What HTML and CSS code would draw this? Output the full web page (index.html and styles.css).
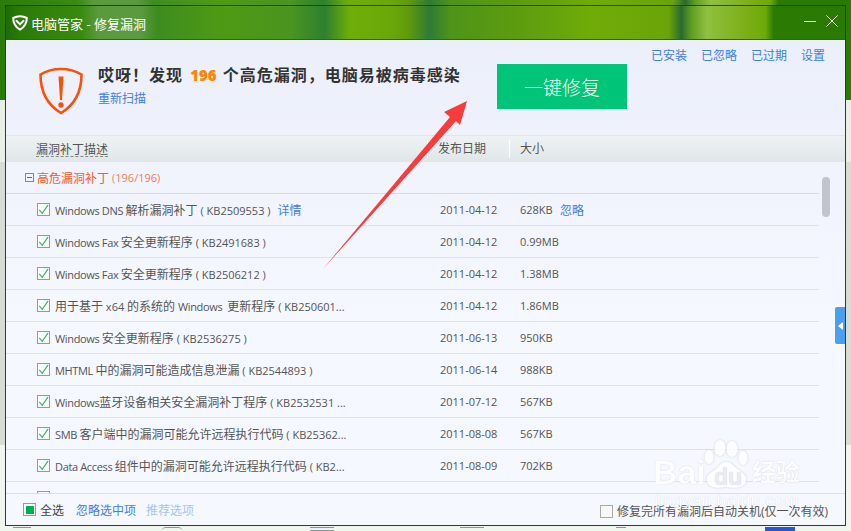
FILE: index.html
```html
<!DOCTYPE html>
<html lang="zh">
<head>
<meta charset="utf-8">
<title>电脑管家 - 修复漏洞</title>
<link rel="stylesheet" href="styles.css">
</head>
<body>
<div class="desktop">
  <div class="window">
    <header class="titlebar">
      <div class="title">
        <svg class="logo" viewBox="0 0 16 16" width="16" height="16"><path d="M8 1.200C5.800 1.200 3.400 1.800 1.200 3c0 4.600 2.200 9 6.800 11.600C12.600 12 14.800 7.600 14.800 3 12.600 1.800 10.200 1.200 8 1.200z" fill="none" stroke="#fff" stroke-width="2"/><path d="M4 5.200L8 9.400l4-4.200" fill="none" stroke="#fff" stroke-width="2"/></svg>
        <span>电脑管家 - 修复漏洞</span>
      </div>
      <div class="winbtns">
        <svg width="14" height="12" viewBox="0 0 14 12"><path d="M1 6.500h12" stroke="#fff" stroke-width="1"/></svg>
        <svg width="12" height="12" viewBox="0 0 12 12"><path d="M.5.500l11 11M11.500.500l-11 11" stroke="#fff" stroke-width="1" fill="none"/></svg>
      </div>
    </header>
    <section class="hero">
      <svg class="shield" viewBox="0 0 46 48" width="46" height="48"><path d="M23 2C16 2 9 3.500 2.500 7.500 2.500 22 8 37 23 46 38 37 43.500 22 43.500 7.500 37 3.500 30 2 23 2z" fill="none" stroke="#fd4f07" stroke-width="2.600"/><path d="M20.500 9.500h5L24 33h-2z" fill="#fd4f07"/><circle cx="23" cy="38" r="2.700" fill="#fd4f07"/></svg>
      <div class="hero-text">
        <h1 class="headline">哎呀！发现 <b class="count">196</b> 个高危漏洞，电脑易被病毒感染</h1>
        <a class="link rescan">重新扫描</a>
      </div>
      <button class="fix">一键修复</button>
      <nav class="toplinks"><a class="link">已安装</a><a class="link">已忽略</a><a class="link">已过期</a><a class="link">设置</a></nav>
    </section>
    <div class="thead">
      <span class="col-desc">漏洞补丁描述</span>
      <span class="col-date">发布日期</span>
      <span class="col-size">大小</span>
    </div>
    <div class="listwrap">
      <div class="group"><span class="minus"></span><span class="group-name">高危漏洞补丁</span><span class="group-num">(196/196)</span></div>
      <div class="row"><span class="check"><svg viewBox="0 0 13 13"><path d="M1.500 7l3.500 4L12 1" fill="none" stroke="#2dbb55" stroke-width="1.300"/></svg></span><span class="name"><span class="en">Windows DNS </span><span class="zh">解析漏洞补丁</span> ( KB2509553 )<a class="link detail">详情</a></span><span class="date">2011-04-12</span><span class="size">628KB</span><a class="link ignore">忽略</a></div>
      <div class="row"><span class="check"><svg viewBox="0 0 13 13"><path d="M1.500 7l3.500 4L12 1" fill="none" stroke="#2dbb55" stroke-width="1.300"/></svg></span><span class="name"><span class="en">Windows Fax </span><span class="zh">安全更新程序</span> ( KB2491683 )</span><span class="date">2011-04-12</span><span class="size">0.99MB</span></div>
      <div class="row"><span class="check"><svg viewBox="0 0 13 13"><path d="M1.500 7l3.500 4L12 1" fill="none" stroke="#2dbb55" stroke-width="1.300"/></svg></span><span class="name"><span class="en">Windows Fax </span><span class="zh">安全更新程序</span> ( KB2506212 )</span><span class="date">2011-04-12</span><span class="size">1.38MB</span></div>
      <div class="row"><span class="check"><svg viewBox="0 0 13 13"><path d="M1.500 7l3.500 4L12 1" fill="none" stroke="#2dbb55" stroke-width="1.300"/></svg></span><span class="name"><span class="zh">用于基于</span> x64 <span class="zh">的系统的</span> <span class="en">Windows&nbsp; </span><span class="zh">更新程序</span> ( KB250601...</span><span class="date">2011-04-12</span><span class="size">1.86MB</span></div>
      <div class="row"><span class="check"><svg viewBox="0 0 13 13"><path d="M1.500 7l3.500 4L12 1" fill="none" stroke="#2dbb55" stroke-width="1.300"/></svg></span><span class="name"><span class="en">Windows </span><span class="zh">安全更新程序</span> ( KB2536275 )</span><span class="date">2011-06-13</span><span class="size">950KB</span></div>
      <div class="row"><span class="check"><svg viewBox="0 0 13 13"><path d="M1.500 7l3.500 4L12 1" fill="none" stroke="#2dbb55" stroke-width="1.300"/></svg></span><span class="name"><span class="en">MHTML </span><span class="zh">中的漏洞可能造成信息泄漏</span> ( KB2544893 )</span><span class="date">2011-06-14</span><span class="size">988KB</span></div>
      <div class="row"><span class="check"><svg viewBox="0 0 13 13"><path d="M1.500 7l3.500 4L12 1" fill="none" stroke="#2dbb55" stroke-width="1.300"/></svg></span><span class="name"><span class="en">Windows</span><span class="zh">蓝牙设备相关安全漏洞补丁程序</span> ( KB2532531 ...</span><span class="date">2011-07-12</span><span class="size">567KB</span></div>
      <div class="row"><span class="check"><svg viewBox="0 0 13 13"><path d="M1.500 7l3.500 4L12 1" fill="none" stroke="#2dbb55" stroke-width="1.300"/></svg></span><span class="name"><span class="en">SMB </span><span class="zh">客户端中的漏洞可能允许远程执行代码</span> ( KB25362...</span><span class="date">2011-08-08</span><span class="size">567KB</span></div>
      <div class="row"><span class="check"><svg viewBox="0 0 13 13"><path d="M1.500 7l3.500 4L12 1" fill="none" stroke="#2dbb55" stroke-width="1.300"/></svg></span><span class="name"><span class="en">Data Access </span><span class="zh">组件中的漏洞可能允许远程执行代码</span> ( KB2...</span><span class="date">2011-08-09</span><span class="size">702KB</span></div>
      <div class="row"><span class="check"></span></div>
      <div class="scrollbar"></div>
      <div class="sidetab"><svg width="5" height="8" viewBox="0 0 5 8"><path d="M5 0v8L0 4z" fill="#fff"/></svg></div>
    </div>
    <footer class="footer">
      <span class="selectall"><i></i></span>
      <span class="all-label">全选</span>
      <a class="link ignore-sel">忽略选中项</a>
      <a class="link faded">推荐选项</a>
      <span class="auto"><span class="box"></span>修复完所有漏洞后自动关机(仅一次有效)</span>
    </footer>
  </div>
  <i class="bit bit1"></i><i class="bit bit2"></i><i class="bit bit3"></i><i class="bit bit4"></i><i class="bit bit5"></i><i class="bit bit6"></i>
  <svg class="arrow" width="851" height="531" viewBox="0 0 851 531"><polygon points="467,101 444,112 450,117 323,269 456,121 460,125" fill="#f93b3b"/></svg>
  <div class="watermark">
    <div class="wm-main">
      <span class="wm-bai">Bai</span>
      <span class="wm-paw">
        <svg width="50" height="52" viewBox="0 0 50 52"><ellipse cx="6" cy="17" rx="4.500" ry="7"/><ellipse cx="17" cy="8" rx="5.500" ry="8"/><ellipse cx="29" cy="9" rx="5.500" ry="8"/><ellipse cx="40" cy="18" rx="4.500" ry="7"/><path d="M23 22c6 0 8 5 13 8 6 4 8 7 7 11-1 6-8 8-20 6C12 49 5 47 4 41c-1-4 1-7 6-10 6-3 7-9 13-9z"/></svg>
        <span class="wm-du">du</span>
      </span>
      <span class="wm-cn">经验</span>
    </div>
    <div class="wm-url">jingyan.baidu.com</div>
  </div>
</div>
</body>
</html>
```
FILE: styles.css
```css
* { box-sizing: border-box; }
html, body { margin: 0; padding: 0; }
body {
  width: 851px;
  height: 531px;
  overflow: hidden;
  font-family: "Open Sans", "Noto Sans CJK SC", sans-serif;
  font-size: 12px;
  color: #555;
}
.desktop {
  position: relative;
  width: 851px;
  height: 531px;
  padding: 5px 5px 0;
  overflow: hidden;
  background:
    linear-gradient(180deg, rgba(232,240,230,0) 100px, #e8f0e6 100px, #e8efe4 162px, #d6ddd3 162px, #d6ddd3 445px, #f0f5ee 445px),
    linear-gradient(90deg, #2a7a08 0, #2f7f0a 2%, #3a8a10 9%, #5a9a3c 11%, #5c9a40 16%, #3e8c20 18%, #4f9a14 26%, #4a9420 34%, #2e8030 38%, #6fae08 41%, #6aa80a 46%, #5f9a0c 48%, #2f7a38 50.500%, #4f9418 53%, #5d9c10 61%, #70ac08 70%, #6aa408 79%, #2a6a30 80.500%, #5e9e20 81.700%, #8fc040 83.500%, #7cb018 88%, #6eaa0a 90.500%, #2a7a04 91.500%, #2a7a04 100%);
}
.window {
  width: 841px;
  height: 521px;
  border: 1px solid #174e0c;
  background: linear-gradient(180deg, #eaeefa 0, #f0f3fc 30%, #f5f8ff 60%);
  display: flex;
  flex-direction: column;
}
.titlebar {
  height: 34px;
  flex: none;
  display: flex;
  justify-content: space-between;
  align-items: center;
  padding: 0 7px 0 6px;
  background: linear-gradient(90deg, #1f6a05 0, #2a7a08 1.500%, #3a8a10 9%, #5a9a3c 11%, #5c9a40 16%, #3e8c20 18%, #4f9a14 26%, #4a9420 34%, #2e8030 38%, #6fae08 41%, #6aa80a 46%, #5f9a0c 48%, #2f7a38 50.500%, #4f9418 53%, #5d9c10 61%, #70ac08 70%, #6aa408 79%, #2a6a30 80.500%, #5e9e20 81.700%, #8fc040 83.500%, #7cb018 88%, #6eaa0a 90.500%, #2a7a04 91.500%, #2a7a04 100%);
  box-shadow: inset 0 -1px 0 #2a6a0a;
}
.title { display: flex; align-items: center; gap: 3px; color: #fff; font-size: 13px; }
.logo { display: block; }
.winbtns { display: flex; align-items: center; gap: 9px; padding-bottom: 4px; }
.winbtns svg { display: block; }
.hero {
  position: relative;
  height: 96px;
  flex: none;
  display: flex;
  align-items: flex-start;
  border-bottom: 1px solid #dfe5ea;
}
.shield { margin: 27px 0 0 32px; flex: none; }
.hero-text { margin: 24px 0 0 14px; width: 399px; flex: none; }
.headline { margin: 0; font-size: 16px; letter-spacing: 1px; line-height: 22px; font-weight: 700; color: #333; white-space: nowrap; }
.count { color: #ff8400; font-size: 15px; letter-spacing: 0; margin: 0 1px 0 2px; }
.link { color: #3f80e0; text-decoration: none; white-space: nowrap; }
.rescan { display: block; margin-top: 5px; line-height: 16px; }
.fix {
  margin-top: 24px;
  width: 130px;
  height: 45px;
  border: 0;
  background: #00c578;
  color: #fff;
  font: 300 19px "Noto Sans CJK SC", sans-serif;
  flex: none;
}
.toplinks { position: absolute; top: 8px; right: 20px; display: flex; gap: 14px; line-height: 16px; }
.thead {
  height: 26px;
  flex: none;
  display: flex;
  align-items: center;
  background: linear-gradient(180deg, #eef2f5, #e0e6e8);
  color: #555;
}
.col-desc { margin-left: 30px; width: 391px; text-decoration: underline dashed #888; text-underline-offset: 2px; }
.col-date { width: 82px; border-left: 1px solid #fff; padding-left: 10px; line-height: 18px; }
.col-size { border-left: 1px solid #fff; padding-left: 10px; line-height: 18px; }
.listwrap { position: relative; flex: 1; min-height: 0; overflow: hidden; }
.group {
  height: 32px;
  width: 813px;
  display: flex;
  align-items: center;
  padding-left: 19px;
  border-bottom: 1px solid #d4dee8;
  color: #f0602c;
}
.minus { width: 9px; height: 9px; border: 1px solid #888; position: relative; margin-right: 3px; }
.minus::after { content: ""; position: absolute; left: 1px; right: 1px; top: 3px; height: 1px; background: #666; }
.group-num { margin-left: 3px; font-size: 11px; color: #f07f50; }
.row {
  height: 32px;
  width: 813px;
  flex: none;
  display: flex;
  align-items: center;
  padding-left: 31px;
  border-bottom: 1px solid #dfe2e8;
  font-size: 11px;
}
.check { width: 13px; height: 13px; border: 1px solid #999; background: #fbfbfb; flex: none; margin-right: 5px; }
.check svg { display: block; width: 11px; height: 11px; overflow: visible; }
.name { width: 385px; flex: none; white-space: nowrap; }
.en { letter-spacing: -.35px; }
.zh { font-size: 12px; }
.detail { margin-left: 7px; font-size: 12px; }
.date { width: 80px; flex: none; }
.size { flex: none; width: 40px; }
.ignore { font-size: 12px; }
.scrollbar { position: absolute; left: 816px; top: 15px; width: 8px; height: 40px; border-radius: 4px; background: #c1c4ca; }
.sidetab { position: absolute; right: 0; top: 145px; width: 10px; height: 37px; background: #4a9fee; border-radius: 2px 0 0 2px; display: flex; align-items: center; justify-content: center; }
.footer {
  height: 32px;
  flex: none;
  display: flex;
  align-items: center;
  position: relative;
  padding-left: 17px;
  border-top: 1px solid #dde1e6;
  background: #f5f8ff;
  color: #444;
}
.selectall { width: 13px; height: 13px; border: 1px solid #999; background: #fff; display: flex; align-items: center; justify-content: center; margin-right: 4px; }
.selectall i { display: block; width: 8px; height: 8px; background: #00b050; }
.all-label { margin-right: 12px; }
.ignore-sel { margin-right: 10px; }
.faded { color: #a8c4ea; }
.auto { position: absolute; right: 17px; top: 8px; display: flex; align-items: center; color: #555; }
.box { width: 13px; height: 13px; border: 1px solid #aaa; background: #f8f8f8; margin-right: 4px; }
.bit { position: absolute; top: 527px; height: 4px; border-top: 1px solid #8a93a8; }
.bit1 { left: 13px; width: 18px; }
.bit2 { left: 162px; width: 20px; border-radius: 10px 10px 0 0; }
.bit3 { left: 310px; width: 24px; border-bottom: 1px solid #8a93a8; }
.bit4 { left: 460px; width: 24px; }
.bit5 { left: 616px; width: 10px; }
.bit6 { left: 765px; width: 30px; background: #2b55d0; border-top: 0; }
.arrow { position: absolute; left: 0; top: 0; pointer-events: none; }
.watermark { position: absolute; left: 653px; top: 440px; width: 152px; color: #fff; opacity: .85; font-family: "Liberation Sans", "Noto Sans CJK SC", sans-serif; text-shadow: 0 0 1px #b4b8c0; }
.wm-main { display: flex; align-items: flex-end; height: 52px; }
.wm-bai { font-size: 34px; font-weight: 700; line-height: 40px; width: 50px; }
.wm-paw { position: relative; width: 49px; height: 52px; flex: none; }
.wm-paw svg { position: absolute; left: 0; top: 0; fill: #fff; filter: drop-shadow(0 0 1px #c4c8d0); }
.wm-du { position: absolute; left: 11px; top: 24px; font-size: 23px; font-weight: 700; line-height: 26px; color: #e9ecf3; }
.wm-cn { font-size: 24px; font-weight: 700; line-height: 38px; white-space: nowrap; }
.wm-url { font-size: 17px; line-height: 16px; margin: 1px 0 0 2px; white-space: nowrap; letter-spacing: .4px; opacity: .9; }
```
